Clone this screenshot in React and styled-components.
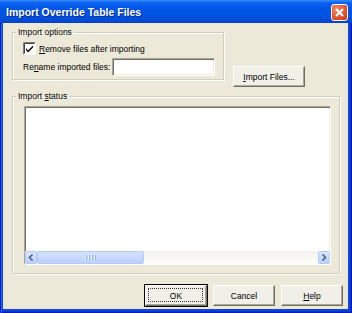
import React from 'react';
import styled, { createGlobalStyle } from 'styled-components';

const GlobalStyle = createGlobalStyle`
  html, body {
    margin: 0;
    padding: 0;
  }
  body {
    background: #0b44d8;
    font-family: 'Liberation Sans', Arial, sans-serif;
    font-size: 8.5px;
    color: #000;
  }
`;

const Window = styled.div`
  width: 352px;
  height: 313px;
  box-sizing: border-box;
  display: flex;
  flex-direction: column;
  background: #0b47dc;
  box-shadow: inset 1px 0 #0019cf, inset 2px 0 #166aee, inset -1px 0 #001ea0,
    inset -2px 0 #0831d9, inset 0 -1px #001ea0, inset 0 -2px #0831d9;
`;

const TitleBar = styled.div`
  height: 23px;
  flex: none;
  display: flex;
  align-items: center;
  padding: 0 4px 0 6px;
  background: linear-gradient(
    to bottom,
    #3a8cff 0%,
    #0a62f0 12%,
    #0055e5 40%,
    #0053e0 70%,
    #0049d3 90%,
    #0841c8 100%
  );
`;

const Title = styled.span`
  flex: 1;
  color: #fff;
  font-size: 10.5px;
  font-weight: bold;
  text-shadow: 1px 1px 0 #0a2a8c;
  padding-top: 1px;
`;

const CloseButton = styled.div`
  width: 17px;
  height: 17px;
  box-sizing: border-box;
  border: 1px solid #fff;
  border-radius: 3px;
  background: radial-gradient(circle at 35% 30%, #f08d6c 0%, #e3572f 55%, #c23a14 100%);
  display: flex;
  align-items: center;
  justify-content: center;
  margin-top: 1px;
`;

const Client = styled.div`
  flex: 1;
  margin: 0 4px 4px 3px;
  background: #ece9d8;
  display: flex;
  flex-direction: column;
  padding: 4px 5px 3px 9px;
`;

const TopRow = styled.div`
  display: flex;
  align-items: flex-start;
`;

const Group = styled.fieldset`
  margin: 0;
  padding: 0;
  min-width: 0;
  border: 1px solid #d0cebf;
  box-shadow: 1px 1px 0 #fff, inset 1px 1px 0 #fff;
  width: ${(p) => p.$width || 'auto'};
  box-sizing: border-box;
`;

const Legend = styled.legend`
  margin-left: 3px;
  padding: 0 2px;
  line-height: 11px;
`;

const OptionsBody = styled.div`
  display: flex;
  flex-direction: column;
  gap: 3px;
  padding: 4px 8px 3px 10px;
`;

const CheckRow = styled.label`
  display: flex;
  align-items: center;
  height: 13px;
  gap: 3px;
`;

const FieldRow = styled.div`
  display: flex;
  align-items: center;
  justify-content: space-between;
`;

const Sunken = styled.div`
  background: #fff;
  border-top: 1px solid #aca899;
  border-left: 1px solid #aca899;
  border-bottom: 1px solid #fff;
  border-right: 1px solid #fff;
  box-shadow: inset 1px 1px 0 #716f64, inset -1px -1px 0 #f1efe2;
  box-sizing: border-box;
`;

const TextInput = styled(Sunken)`
  width: 103px;
  height: 18px;
`;

const Button = styled.div`
  box-sizing: border-box;
  width: ${(p) => p.$width || '62px'};
  height: 21px;
  display: flex;
  align-items: center;
  justify-content: center;
  background: #f0efe8;
  border-top: 1px solid #fff;
  border-left: 1px solid #fff;
  border-right: 1px solid #716f64;
  border-bottom: 1px solid #716f64;
  box-shadow: inset -1px -1px 0 #aca899;
  outline: ${(p) => (p.$default ? '1px solid #000' : 'none')};
  position: relative;
`;

const FocusRing = styled.span`
  position: absolute;
  inset: 2px 3px 3px 2px;
  border: 1px dotted #333;
`;

const ImportButton = styled(Button)`
  margin-left: 9px;
  margin-top: 39px;
`;

const StatusGroup = styled(Group)`
  margin-top: 4px;
  margin-right: 3px;
`;

const StatusBody = styled.div`
  padding: 4px 8px 8px 11px;
`;

const ListBox = styled(Sunken)`
  height: 159px;
  display: flex;
  flex-direction: column;
  justify-content: flex-end;
`;

const HScroll = styled.div`
  height: 13px;
  display: flex;
  background: linear-gradient(to bottom, #f3f1ec, #fefefb);
`;

const ArrowBtn = styled.div`
  width: 12px;
  height: 13px;
  box-sizing: border-box;
  border: 1px solid #b7caf5;
  border-radius: 2px;
  background: linear-gradient(to bottom, #dbe6fe, #b9cffc);
  display: flex;
  align-items: center;
  justify-content: center;
`;

const Thumb = styled.div`
  width: 107px;
  height: 13px;
  box-sizing: border-box;
  border: 1px solid #b5c9f5;
  border-radius: 2px;
  background: linear-gradient(to bottom, #d4e1fe, #bbd0fb);
  display: flex;
  align-items: center;
  justify-content: center;
  gap: 1px;
`;

const Grip = styled.span`
  width: 1px;
  height: 5px;
  background: #eef3fe;
  box-shadow: 1px 0 0 #8cb0f8;
  margin-right: 1px;
`;

const Track = styled.div`
  flex: 1;
`;

const ButtonRow = styled.div`
  display: flex;
  justify-content: flex-end;
  gap: 6px;
  margin-top: 11px;
`;

const Key = styled.u`
  text-underline-offset: 1px;
`;

const CheckBox = () => (
  <svg width="13" height="13" viewBox="0 0 13 13">
    <rect x="0" y="0" width="13" height="13" fill="#fff" />
    <path d="M0.5 12.5 V0.5 H12.5" stroke="#808080" fill="none" />
    <path d="M1.5 11.5 V1.5 H11.5" stroke="#404040" fill="none" />
    <path d="M3 6 L5 8.5 L10 3.5 L10 5.5 L5 10.5 L3 8 Z" fill="#000" />
  </svg>
);

const Arrow = ({ dir }) => (
  <svg width="6" height="7" viewBox="0 0 6 7">
    <path
      d={dir === 'left' ? 'M4.5 0.5 L1.5 3.5 L4.5 6.5' : 'M1.5 0.5 L4.5 3.5 L1.5 6.5'}
      stroke="#4d6185"
      strokeWidth="1.6"
      fill="none"
    />
  </svg>
);

export default function App() {
  return (
    <>
      <GlobalStyle />
      <Window>
        <TitleBar>
          <Title>Import Override Table Files</Title>
          <CloseButton>
            <svg width="9" height="9" viewBox="0 0 9 9">
              <path d="M1 1 L8 8 M8 1 L1 8" stroke="#fff" strokeWidth="2" />
            </svg>
          </CloseButton>
        </TitleBar>
        <Client>
          <TopRow>
            <Group $width="212px">
              <Legend>Import options</Legend>
              <OptionsBody>
                <CheckRow>
                  <CheckBox />
                  <span>
                    <Key>R</Key>emove files after importing
                  </span>
                </CheckRow>
                <FieldRow>
                  <span>
                    Re<Key>n</Key>ame imported files:
                  </span>
                  <TextInput />
                </FieldRow>
              </OptionsBody>
            </Group>
            <ImportButton $width="72px">
              <span>
                <Key>I</Key>mport Files...
              </span>
            </ImportButton>
          </TopRow>
          <StatusGroup>
            <Legend>
              Import <Key>s</Key>tatus
            </Legend>
            <StatusBody>
              <ListBox>
                <HScroll>
                  <ArrowBtn>
                    <Arrow dir="left" />
                  </ArrowBtn>
                  <Thumb>
                    <Grip />
                    <Grip />
                    <Grip />
                    <Grip />
                  </Thumb>
                  <Track />
                  <ArrowBtn>
                    <Arrow dir="right" />
                  </ArrowBtn>
                </HScroll>
              </ListBox>
            </StatusBody>
          </StatusGroup>
          <ButtonRow>
            <Button $default>
              <FocusRing />
              <span>OK</span>
            </Button>
            <Button>
              <span>Cancel</span>
            </Button>
            <Button>
              <span>
                <Key>H</Key>elp
              </span>
            </Button>
          </ButtonRow>
        </Client>
      </Window>
    </>
  );
}
